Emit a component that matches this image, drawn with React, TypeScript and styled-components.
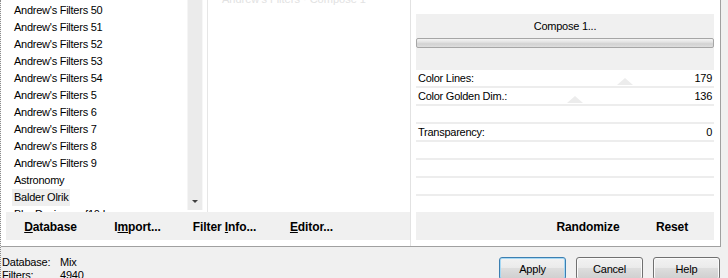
import React from "react";
import styled, { createGlobalStyle } from "styled-components";

const Global = createGlobalStyle`
  html, body { margin: 0; padding: 0; background: #f0f0f0; }
  body { font-family: "Liberation Sans", Arial, sans-serif; font-size: 11px; color: #000; }
  * { box-sizing: border-box; }
`;

const Root = styled.div`
  width: 728px;
  height: 278px;
  overflow: hidden;
  border-left: 1px dotted #8c8c8c;
  background: #f0f0f0;
`;

const Frame = styled.div`
  width: 720px;
  height: 247px;
  display: flex;
  background: #fff;
  border-right: 1px solid #a0a0a0;
  border-bottom: 1px solid #a0a0a0;
`;

const LeftSection = styled.div`
  width: 410px;
  display: flex;
  flex-direction: column;
  border-right: 1px solid #e2e2e2;
`;

const TopArea = styled.div`
  height: 212px;
  display: flex;
`;

const List = styled.div`
  width: 186px;
  padding: 2px 0 0 11px;
  overflow: hidden;
`;

const Item = styled.div<{ $selected?: boolean }>`
  height: 17px;
  line-height: 17px;
  padding: 0 2px;
  white-space: nowrap;
  letter-spacing: -0.25px;
  display: table;
  background: ${(p) => (p.$selected ? "#efefef" : "transparent")};
`;

const Scrollbar = styled.div`
  width: 16px;
  height: 210px;
  background: #ebebeb;
  border-left: 1px solid #f5f5f5;
  border-right: 1px solid #f7f7f7;
  display: flex;
  flex-direction: column;
  justify-content: flex-end;
  align-items: center;
  padding-bottom: 7px;
`;

const ArrowDown = styled.div`
  width: 0;
  height: 0;
  border-left: 3px solid transparent;
  border-right: 3px solid transparent;
  border-top: 3px solid #404040;
`;

const Gap = styled.div`
  width: 4px;
`;

const Preview = styled.div`
  flex: 1;
  border-left: 1px solid #e6e6e6;
  overflow: hidden;
  padding-left: 14px;
`;

const FaintText = styled.div`
  margin-top: -7px;
  color: #e2e2e2;
  font-size: 11px;
  line-height: 13px;
`;

const Toolbar = styled.div`
  height: 28px;
  margin-left: 5px;
  background: #f0f0f0;
  display: grid;
  grid-template-columns: repeat(4, 87px);
  padding-left: 1px;
`;

const ToolButton = styled.div`
  font-weight: bold;
  font-size: 12px;
  letter-spacing: -0.1px;
  display: flex;
  align-items: center;
  justify-content: center;
  padding-top: 1px;
  u { text-decoration: underline; text-underline-offset: 1px; }
`;

const RightSection = styled.div`
  flex: 1;
  display: flex;
  flex-direction: column;
  padding: 14px 6px 6px 5px;
`;

const ComposeBlock = styled.div`
  height: 56px;
  background: #f0f0f0;
  display: flex;
  flex-direction: column;
`;

const ComposeTitle = styled.div`
  height: 24px;
  line-height: 24px;
  text-align: center;
  letter-spacing: -0.25px;
`;

const Progress = styled.div`
  height: 10px;
  border: 1px solid #a6a6a6;
  border-radius: 2px;
  background: linear-gradient(#f4f4f4 0%, #e2e2e2 40%, #d2d2d2 60%, #dedede 100%);
`;

const Rows = styled.div`
  display: flex;
  flex-direction: column;
`;

const Row = styled.div`
  position: relative;
  height: 18px;
  border-bottom: 2px solid #ededed;
  display: flex;
  align-items: center;
  justify-content: space-between;
  padding: 0 2px;
  letter-spacing: -0.25px;
`;

const Label = styled.span`
  position: relative;
  z-index: 1;
`;

const Thumb = styled.div`
  position: absolute;
  bottom: 1px;
  width: 0;
  height: 0;
  margin-left: -8px;
  border-left: 8px solid transparent;
  border-right: 8px solid transparent;
  border-bottom: 7px solid #ececec;
`;

const Spacer = styled.div`
  flex: 1;
`;

const RightToolbar = styled.div`
  height: 28px;
  background: #f0f0f0;
  display: flex;
  justify-content: flex-end;
`;

const RightToolButton = styled(ToolButton)`
  width: 84px;
`;

const Bottom = styled.div`
  display: flex;
  padding: 9px 8px 0 1px;
`;

const Info = styled.div`
  display: grid;
  grid-template-columns: 58px auto;
  line-height: 13px;
  letter-spacing: -0.2px;
`;

const Buttons = styled.div`
  margin-left: auto;
  display: flex;
  gap: 10px;
  margin-top: 1px;
`;

const Button = styled.div<{ $default?: boolean }>`
  width: 67px;
  height: 23px;
  border-radius: 3px;
  border: 1px solid ${(p) => (p.$default ? "#3c7fb1" : "#707070")};
  box-shadow: ${(p) => (p.$default ? "inset 0 0 0 1px #a6d8f4" : "inset 0 0 0 1px #fbfbfb")};
  background: linear-gradient(#f2f2f2 0%, #ebebeb 45%, #dddddd 50%, #cfcfcf 100%);
  display: flex;
  align-items: center;
  justify-content: center;
  letter-spacing: -0.2px;
`;

const items = [
  "Andrew's Filters 50",
  "Andrew's Filters 51",
  "Andrew's Filters 52",
  "Andrew's Filters 53",
  "Andrew's Filters 54",
  "Andrew's Filters 5",
  "Andrew's Filters 6",
  "Andrew's Filters 7",
  "Andrew's Filters 8",
  "Andrew's Filters 9",
  "Astronomy",
  "Balder Olrik",
  "Bkg Designer sf10 I",
];

const params: { label: string; value?: number; max?: number }[] = [
  { label: "Color Lines:", value: 179, max: 255 },
  { label: "Color Golden Dim.:", value: 136, max: 255 },
  { label: "" },
  { label: "Transparency:", value: 0 },
  { label: "" },
  { label: "" },
  { label: "" },
];

export default function App() {
  return (
    <Root>
      <Global />
      <Frame>
        <LeftSection>
          <TopArea>
            <List>
              {items.map((it) => (
                <Item key={it} $selected={it === "Balder Olrik"}>
                  {it}
                </Item>
              ))}
            </List>
            <Scrollbar>
              <ArrowDown />
            </Scrollbar>
            <Gap />
            <Preview>
              <FaintText>Andrew's Filters · Compose 1</FaintText>
            </Preview>
          </TopArea>
          <Toolbar>
            <ToolButton>
              <u>D</u>atabase
            </ToolButton>
            <ToolButton>
              I<u>m</u>port...
            </ToolButton>
            <ToolButton>
              Filter&nbsp;<u>I</u>nfo...
            </ToolButton>
            <ToolButton>
              <u>E</u>ditor...
            </ToolButton>
          </Toolbar>
        </LeftSection>
        <RightSection>
          <ComposeBlock>
            <ComposeTitle>Compose 1...</ComposeTitle>
            <Progress />
          </ComposeBlock>
          <Rows>
            {params.map((p, i) => (
              <Row key={i}>
                {p.max ? <Thumb style={{ left: `${(p.value! / p.max) * 100}%` }} /> : null}
                <Label>{p.label}</Label>
                <Label>{p.value !== undefined ? p.value : ""}</Label>
              </Row>
            ))}
          </Rows>
          <Spacer />
          <RightToolbar>
            <RightToolButton>Randomize</RightToolButton>
            <RightToolButton>Reset</RightToolButton>
          </RightToolbar>
        </RightSection>
      </Frame>
      <Bottom>
        <Info>
          <span>Database:</span>
          <span>Mix</span>
          <span>Filters:</span>
          <span>4940</span>
        </Info>
        <Buttons>
          <Button $default>Apply</Button>
          <Button>Cancel</Button>
          <Button>Help</Button>
        </Buttons>
      </Bottom>
    </Root>
  );
}
